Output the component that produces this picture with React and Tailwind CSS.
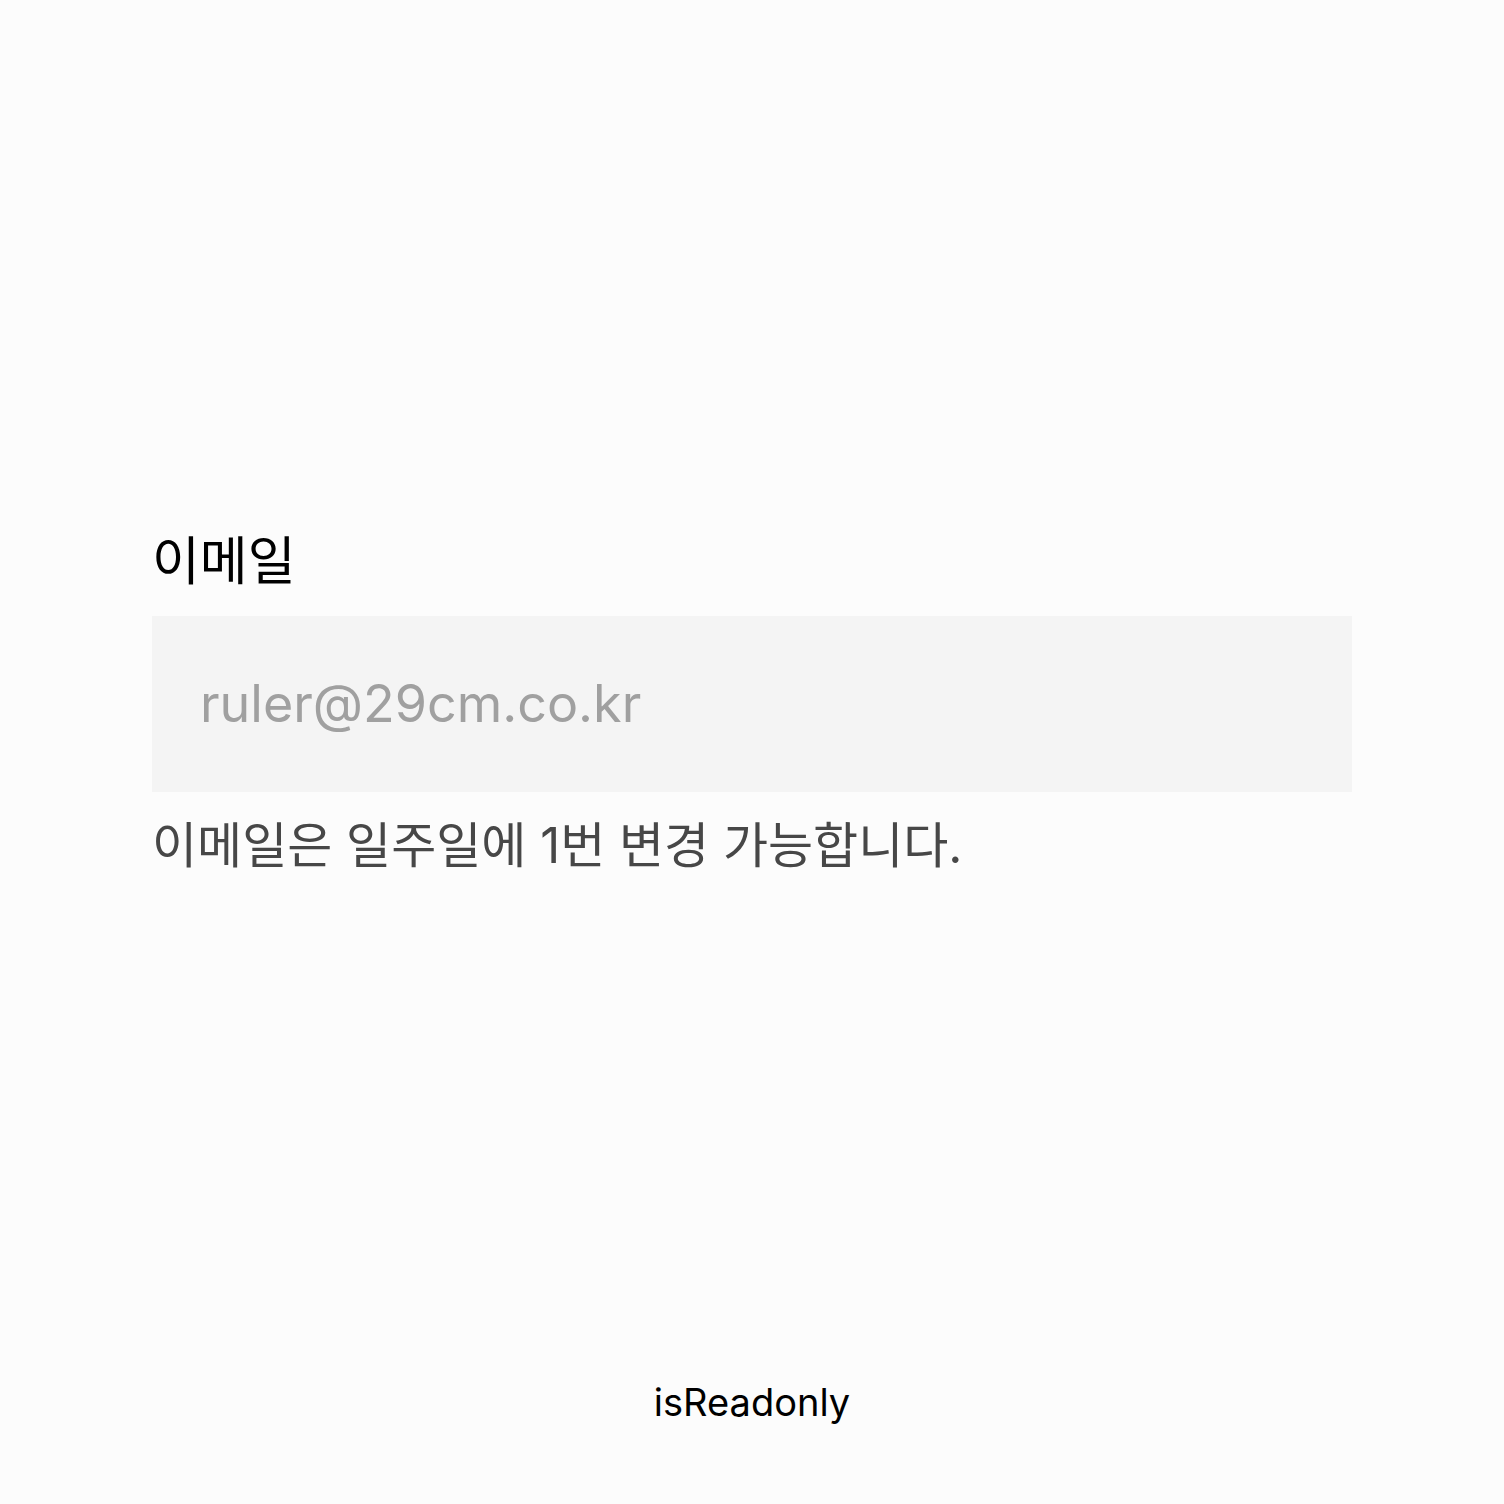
import React from 'react';

const font = { fontFamily: 'Inter, "Noto Sans CJK KR", sans-serif' };

const EmailField = () => {
  return (
    <div className="flex flex-col">
      <label className="text-[52px] leading-[64px] font-normal text-black">이메일</label>
      <div className="mt-[22px] h-[176px] w-[1200px] bg-[#f4f4f4] flex items-center px-[48px]">
        <input
          readOnly
          value="ruler@29cm.co.kr"
          className="w-full bg-transparent outline-none text-[52px] text-[#a0a0a0]"
          style={font}
        />
      </div>
      <p className="mt-[22px] text-[49px] leading-[64px] text-[#474747]">이메일은 일주일에 1번 변경 가능합니다.</p>
    </div>
  );
};

export default function App() {
  return (
    <div className="h-[1504px] w-[1504px] bg-[#fcfcfc] flex flex-col" style={font}>
      <div className="pt-[530px] pl-[152px]">
        <EmailField />
      </div>
      <div className="mt-auto pb-[78px] text-center text-[38px] leading-[48px] text-black">isReadonly</div>
    </div>
  );
}
